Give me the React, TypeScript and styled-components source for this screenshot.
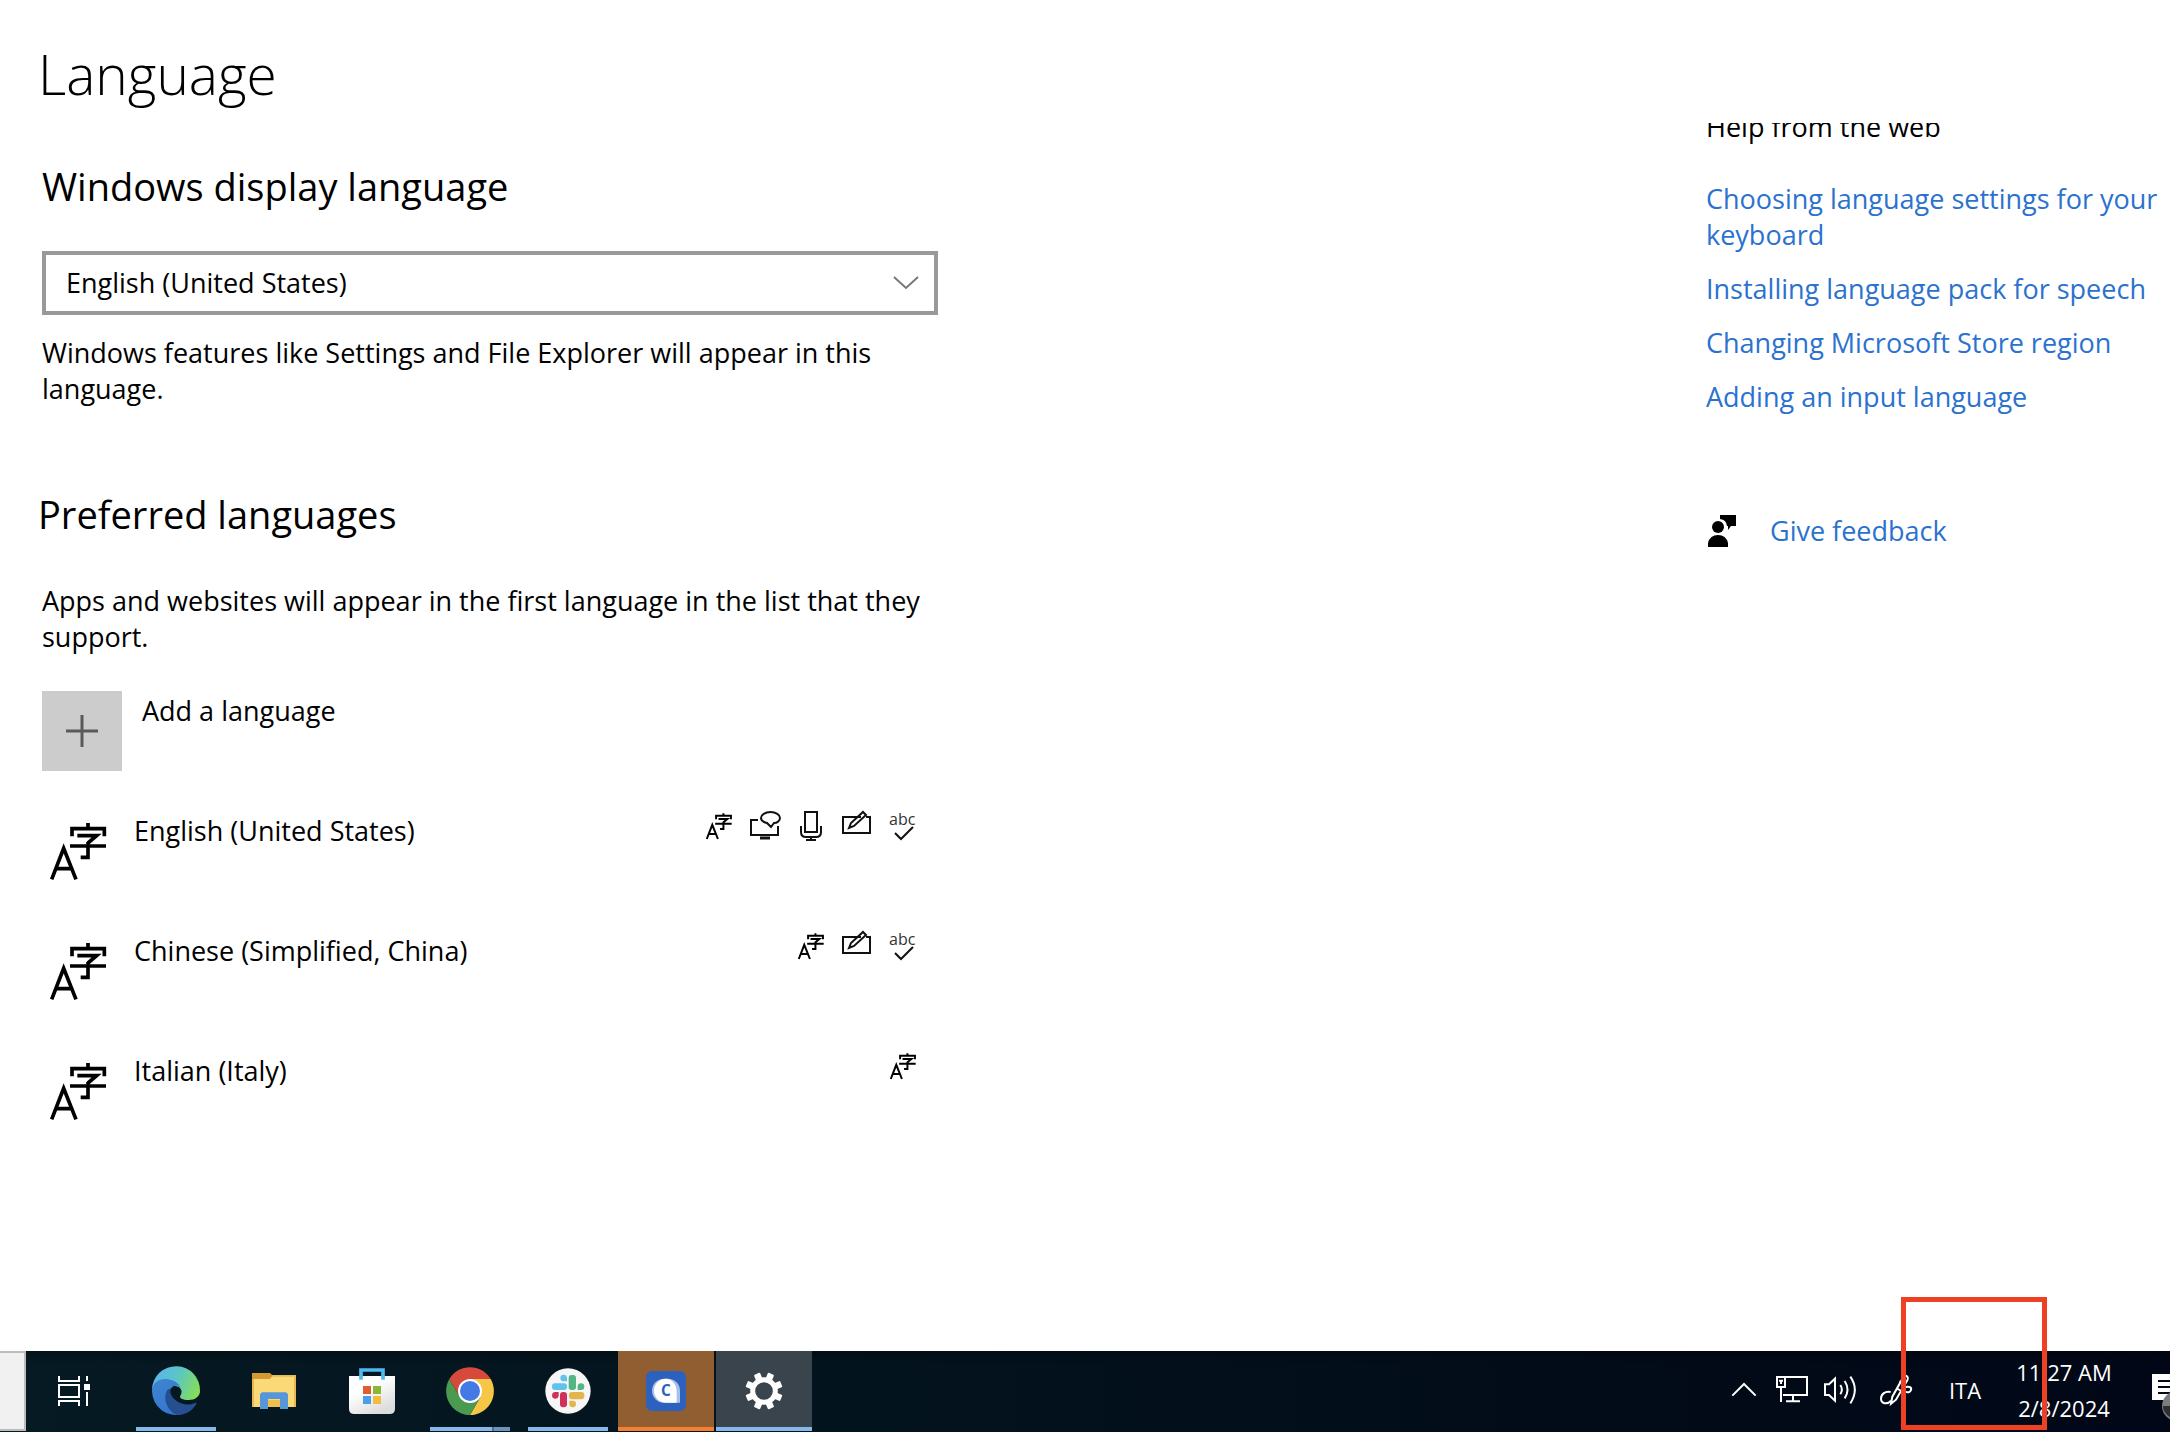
import React from "react";
import styled, { createGlobalStyle, css } from "styled-components";

const ui = `"Open Sans", "Noto Sans", "Noto Sans CJK SC", sans-serif`;

const GlobalStyle = createGlobalStyle`
  *, *::before, *::after { box-sizing: border-box; }
  body { margin: 0; background: #fff; color: #000; font: 400 27px/36px ${ui}; }
  h1, h2, h3, p, ul { margin: 0; padding: 0; font-weight: 400; }
  ul { list-style: none; }
  button, select { font: inherit; color: inherit; background: none; border: 0; padding: 0; margin: 0; border-radius: 0; }
  svg { display: block; flex: none; overflow: visible; }
`;

/* ---------- page ---------- */

const Page = styled.div`
  display: flex;
  flex-direction: column;
  min-height: 100vh;
  overflow: hidden;
`;

const Body = styled.div`
  flex: 1;
  display: flex;
  justify-content: space-between;
  align-items: flex-start;
`;

const Main = styled.main`
  flex: 0 1 938px;
  padding: 38px 0 40px 42px;
`;

const Title = styled.h1`
  margin-left: -4px;
  font-size: 55px;
  line-height: 72px;
  font-weight: 300;
`;

const Section = styled.section<{ $top: number }>`
  margin-top: ${(p) => p.$top}px;
`;

const Heading = styled.h2<{ $outdent?: boolean }>`
  font-size: 38px;
  line-height: 52px;
  ${(p) => p.$outdent && css`margin-left: -4px;`}
`;

const SelectBox = styled.div`
  display: grid;
  align-items: center;
  margin-top: 39px;
  > * { grid-area: 1 / 1; }
  > svg { justify-self: end; margin-right: 20px; pointer-events: none; }
`;

const Select = styled.select`
  appearance: none;
  width: 100%;
  height: 64px;
  padding-left: 20px;
  border: 4px solid #999;
  background: #fff;
`;

const Note = styled.p<{ $top: number }>`
  margin-top: ${(p) => p.$top}px;
`;

const List = styled.ul`
  display: flex;
  flex-direction: column;
  gap: 40px;
  margin-top: 40px;
`;

const rowLayout = css<{ $gap: number }>`
  display: flex;
  align-items: flex-start;
  gap: ${(p) => p.$gap}px;
  min-height: 80px;
  text-align: left;
`;

const AddButton = styled.button<{ $gap: number }>`
  ${rowLayout}
  margin-top: 36px;
`;

const LanguageRow = styled.li<{ $gap: number }>`
  ${rowLayout}
`;

const Tile = styled.span<{ $fill?: string }>`
  display: grid;
  place-items: center;
  flex: none;
  width: 80px;
  height: 80px;
  background: ${(p) => p.$fill || "transparent"};
`;

const RowLabel = styled.span`
  padding-top: 2px;
`;

const Features = styled.div`
  display: flex;
  margin-left: auto;
  padding-right: 12px;
`;

/* ---------- help column ---------- */

const Aside = styled.aside`
  flex: 0 0 464px;
  margin-top: 123px;
  overflow: hidden;
`;

const HelpTitle = styled.h3`
  margin-top: -14px;
  font-size: 27px;
`;

const HelpLinks = styled.ul`
  display: flex;
  flex-direction: column;
  gap: 18px;
  margin-top: 36px;
`;

const Link = styled.a`
  display: block;
  color: #2b72cf;
  text-decoration: none;
`;

const Feedback = styled.div`
  display: flex;
  align-items: center;
  gap: 34px;
  margin-top: 98px;
  padding-left: 2px;
`;

/* ---------- taskbar ---------- */

const Taskbar = styled.footer`
  display: flex;
  height: 81px;
  padding-bottom: 1px;
  background: linear-gradient(180deg, rgba(0, 0, 0, 0.3), rgba(0, 0, 0, 0) 14px),
    linear-gradient(90deg, #061a23, #03131d 40%, #020a18 80%, #010717);
  color: #fff;
  font-size: 22px;
`;

const SearchEdge = styled.div`
  width: 26px;
  background: #f1f1f1;
  border: 2px solid #bcbcbc;
  border-left: 0;
`;

const Apps = styled.nav`
  display: flex;
  gap: 2px;
`;

const AppButton = styled.button<{ $bg?: string; $bar?: string; $full?: boolean; $last?: number }>`
  position: relative;
  display: grid;
  place-items: center;
  width: 96px;
  margin-right: ${(p) => p.$last || 0}px;
  background: ${(p) => p.$bg || "transparent"};
  &::after {
    content: "";
    position: absolute;
    bottom: 0;
    left: ${(p) => (p.$full ? 0 : 8)}px;
    right: ${(p) => (p.$full ? 0 : 8)}px;
    height: 4px;
    background: ${(p) => p.$bar || "transparent"};
  }
`;

const Tray = styled.div`
  display: flex;
  margin-left: auto;
`;

const TrayButton = styled.button<{ $w: number }>`
  position: relative;
  display: grid;
  place-items: center;
  width: ${(p) => p.$w}px;
  padding-bottom: 2px;
  line-height: 36px;
`;

const Highlight = styled.span`
  position: absolute;
  z-index: 1;
  inset: -54px -45px 1px -27px;
  border: 5px solid #ed4024;
  pointer-events: none;
`;

const Notifications = styled.button`
  width: 44px;
  padding-left: 26px;
  overflow: hidden;
`;

/* ---------- icons ---------- */

/* Language pack symbol, shared by the large row icon and the small feature icon. */
const LanguageMark = ({ weight }: { weight: number }) => (
  <g fill="none" stroke="#000" strokeWidth={weight}>
    <path d="M155 298l36-93 37 93M167 266h48" />
    <path d="M264 129v16M216 169v-23h97v23M232 167h58l-26 22M210 198h108M264 186v46h-22" />
  </g>
);

const LangIcon = () => (
  <svg width="80" height="80" viewBox="126 93 240 240" aria-hidden="true">
    <LanguageMark weight={11} />
  </svg>
);

type FeatureName = "display" | "speech" | "mic" | "pen" | "spell";

function FeatureIcon({ name }: { name: FeatureName }) {
  return (
    <svg width="46" height="32" viewBox="0 0 46 32" fill="none" stroke="#111" strokeWidth="2" role="img" aria-label={name}>
      {name === "display" && (
        <svg x="10" y="2" width="26" height="26" viewBox="150 128 170 170">
          <LanguageMark weight={13} />
        </svg>
      )}
      {name === "speech" && (
        <>
          <path d="M16 9H9v15h27V15" />
          <path d="M18 27h10" strokeWidth="3" />
          <path d="M25 12c-4-1-6-3-6-5 0-3 4-6 9.500-6s9.500 3 9.500 6-3 5-6 5l-3 4z" />
        </>
      )}
      {name === "mic" && (
        <>
          <path d="M17 1h12v20H17z" />
          <path d="M13 15v6q0 5 5 5h10q5 0 5-5v-6M23 26v3M18 29h10" />
        </>
      )}
      {name === "pen" && (
        <>
          <path d="M27 6H9v16h27V6h-4" />
          <path d="M15 17l2-5L29 1l3 3-12 11z" />
        </>
      )}
      {name === "spell" && (
        <>
          <text x="9" y="14" fontSize="16" fill="#333" stroke="none" fontFamily="Open Sans, sans-serif">abc</text>
          <path d="M15 22l6 6L33 16" />
        </>
      )}
    </svg>
  );
}

const ChevronDown = () => (
  <svg width="24" height="14" viewBox="0 0 24 14" fill="none" stroke="#777" strokeWidth="2" aria-hidden="true">
    <path d="M0 1l12 11L24 1" />
  </svg>
);

const PlusIcon = () => (
  <svg width="32" height="32" viewBox="0 0 32 32" fill="none" stroke="#5a5a5a" strokeWidth="3" aria-hidden="true">
    <path d="M16 0v32M0 16h32" />
  </svg>
);

const FeedbackIcon = () => (
  <svg width="28" height="32" viewBox="0 0 28 32" aria-hidden="true">
    <path d="M12 0h16v11h-5l-3 4v-4h-1a8 8 0 0 0-7-7z" />
    <circle cx="10" cy="12" r="6" />
    <path d="M0 32v-4q2-8 10-8t10 8v4z" />
  </svg>
);

const TaskViewIcon = () => (
  <svg width="32" height="30" viewBox="174 135 96 90" fill="none" stroke="#fff" strokeWidth="6" aria-hidden="true">
    <path d="M177 135v15h60v-15M177 162h60v36h-60zM177 225v-15h60v15M261 135v15M261 183v42" />
    <path d="M252 159h18v18h-18z" fill="#fff" stroke="none" />
  </svg>
);

const EdgeIcon = () => (
  <svg width="48" height="48" viewBox="456 111 144 144" aria-hidden="true">
    <defs>
      <linearGradient id="edgeTop" x1="0" y1="0.300" x2="1" y2="0.600">
        <stop offset="0" stopColor="#5ab4ee" />
        <stop offset="0.500" stopColor="#5cc6c4" />
        <stop offset="1" stopColor="#84de58" />
      </linearGradient>
      <linearGradient id="edgeLeft" x1="0" y1="0" x2="0.500" y2="1">
        <stop offset="0" stopColor="#3f86cf" />
        <stop offset="1" stopColor="#3576d2" />
      </linearGradient>
    </defs>
    <path fill="url(#edgeTop)" d="M456 178A72 72 0 0 1 600 183C600 200 585 210 566 210C548 210 537 204 541 197C547 188 546 180 538 172L520 166L480 160Z" />
    <path fill="url(#edgeLeft)" d="M456 183C457 160 474 147 496 147C522 148 538 160 542 176C534 162 514 164 509 184C506 206 520 236 548 252A72 72 0 0 1 456 183Z" />
    <path fill="#264f92" d="M502 180C490 200 494 236 530 255C556 255 576 244 589 222C590 218 587 217 584 219C568 227 545 224 530 213C515 202 508 190 512 174Z" />
  </svg>
);

const ExplorerIcon = () => (
  <svg width="44" height="36" viewBox="756 129 132 108" aria-hidden="true">
    <path fill="#e9b851" d="M756 135h132v96H756z" />
    <path fill="#fbd976" d="M762 140h120v91H762z" />
    <path fill="#d49a32" d="M756 129h54l6 6v5l-7 7h-53z" />
    <path fill="#5696db" d="M786 187h72l6 6v44h-24v-30h-36v30h-24v-44z" />
    <path fill="#efc04c" d="M804 210h36v21h-36z" />
  </svg>
);

const StoreIcon = () => (
  <svg width="46" height="46" viewBox="1044 117 138 138" aria-hidden="true">
    <defs>
      <linearGradient id="bag" x1="0" y1="0" x2="0.600" y2="1">
        <stop offset="0.400" stopColor="#fff" />
        <stop offset="1" stopColor="#dcdcdc" />
      </linearGradient>
    </defs>
    <path fill="url(#bag)" d="M1044 141h138v98q0 16-16 16h-106q-16 0-16-16z" />
    <path fill="none" stroke="#4fb9f0" strokeWidth="11" d="M1080 152v-29h66v29" />
    <path fill="#e15b33" d="M1086 171h24v24h-24z" />
    <path fill="#8ab833" d="M1116 171h24v24h-24z" />
    <path fill="#4b9fe9" d="M1086 201h24v24h-24z" />
    <path fill="#f5bb3e" d="M1116 201h24v24h-24z" />
  </svg>
);

const ChromeIcon = () => (
  <svg width="48" height="48" viewBox="-72 -72 144 144" aria-hidden="true">
    <path fill="#d64a3b" d="M-62-36A72 72 0 0 1 62-36H0L-31 18Z" />
    <path fill="#f6c646" d="M62-36A72 72 0 0 1 0 72L31 18L0-36Z" />
    <path fill="#4a9a50" d="M0 72A72 72 0 0 1-62-36L-31 18H31Z" />
    <circle r="36" fill="#fff" />
    <circle r="30" fill="#4579e6" />
  </svg>
);

const SlackIcon = () => (
  <svg width="46" height="46" viewBox="404 113 138 138" aria-hidden="true">
    <circle cx="473" cy="182" r="68" fill="#f6f6f6" />
    <g fill="#5fc3ee">
      <rect x="425" y="159" width="45" height="20" rx="9" />
      <path d="M470 153h-11a10 10 0 1 1 11-10z" />
    </g>
    <g fill="#52b583">
      <rect x="475" y="134" width="22" height="45" rx="9" />
      <path d="M502 179v-11a10 10 0 1 1 10 11z" />
    </g>
    <g fill="#d0315c">
      <rect x="449" y="185" width="21" height="46" rx="9" />
      <path d="M445 185v12a10 10 0 1 1-10-12z" />
    </g>
    <g fill="#e4b44e">
      <rect x="476" y="185" width="46" height="22" rx="9" />
      <path d="M477 211h11a10 10 0 1 1-11 10z" />
    </g>
  </svg>
);

const CIcon = () => (
  <svg width="40" height="40" viewBox="708 124 120 120" aria-hidden="true">
    <rect x="708" y="124" width="120" height="120" rx="18" fill="#2c61bd" />
    <path fill="#a9c1ea" d="M762 147a36 36 0 0 0 0 72h48v-36a36 36 0 0 0-36-36z" />
    <path fill="#fff" d="M768 147a36 36 0 0 0 0 72h32v-36a34 36 0 0 0-32-36z" />
    <text x="768" y="200" textAnchor="middle" fontSize="46" fontWeight="700" fill="#2c61bd" fontFamily="Open Sans, sans-serif">C</text>
  </svg>
);

const GearIcon = () => (
  <svg width="38" height="38" viewBox="-57 -57 114 114" aria-hidden="true">
    <circle r="34" fill="none" stroke="#fff" strokeWidth="15" />
    {[0, 1, 2, 3, 4, 5, 6, 7].map((i) => (
      <rect key={i} x="-10" y="-56" width="20" height="20" rx="3" fill="#fff" transform={`rotate(${22.5 + i * 45})`} />
    ))}
  </svg>
);

const ChevronUp = () => (
  <svg width="26" height="16" viewBox="93 310 78 48" fill="none" stroke="#fff" strokeWidth="6" aria-hidden="true">
    <path d="M97 351l35-35 35 35" />
  </svg>
);

const NetworkIcon = () => (
  <svg width="32" height="28" viewBox="228 297 96 84" fill="none" stroke="#fff" strokeWidth="6" aria-hidden="true">
    <path d="M231 300h24v30h-24zM237 311h12M243 311v10M255 300h66v54h-72M243 330v45M279 354v18M258 373h42" />
  </svg>
);

const SpeakerIcon = () => (
  <svg width="34" height="30" viewBox="369 289 102 90" fill="none" stroke="#fff" strokeWidth="6" aria-hidden="true">
    <path d="M375 317h12l18-17v66l-18-17h-12z" />
    <path d="M421 319q9 14 0 28M434 307q17 26 0 52M451 294q27 39 0 80" />
  </svg>
);

const InkIcon = () => (
  <svg width="34" height="32" viewBox="537 288 102 96" fill="none" stroke="#fff" strokeWidth="6" aria-hidden="true">
    <path d="M572 342c-16-4-29 6-29 20s18 20 30 6" />
    <path d="M573 377l4-21 32-57q7-9 13-3 4 5 0 11l-34 58zM588 330l16 9M598 310l16 9" />
    <path d="M612 328c14-5 24 0 21 8-2 7-10 9-17 5" />
  </svg>
);

const NotificationIcon = () => (
  <svg width="48" height="48" viewBox="0 0 48 48" aria-hidden="true">
    <path fill="#fff" d="M0 7h32v26H0z" />
    <path stroke="#020a18" strokeWidth="2" d="M6 14h26M6 20h26M6 26h26" />
    <circle cx="25" cy="39" r="15" fill="#7d7d7d" />
    <path fill="#2f2f2f" d="M11 39h30a15 13 0 0 1-30 0z" />
  </svg>
);

/* ---------- data ---------- */

const languages: { name: string; features: FeatureName[] }[] = [
  { name: "English (United States)", features: ["display", "speech", "mic", "pen", "spell"] },
  { name: "Chinese (Simplified, China)", features: ["display", "pen", "spell"] },
  { name: "Italian (Italy)", features: ["display"] },
];

const helpLinks = [
  "Choosing language settings for your keyboard",
  "Installing language pack for speech",
  "Changing Microsoft Store region",
  "Adding an input language",
];

const blue = "#86b8ea";

export default function App() {
  return (
    <Page>
      <GlobalStyle />
      <Body>
        <Main>
          <Title>Language</Title>
          <Section $top={50}>
            <Heading id="display-language">Windows display language</Heading>
            <SelectBox>
              <Select aria-labelledby="display-language">
                <option>English (United States)</option>
              </Select>
              <ChevronDown />
            </SelectBox>
            <Note $top={20}>Windows features like Settings and File Explorer will appear in this language.</Note>
          </Section>
          <Section $top={81}>
            <Heading $outdent>Preferred languages</Heading>
            <Note $top={43}>Apps and websites will appear in the first language in the list that they support.</Note>
            <AddButton type="button" $gap={20}>
              <Tile $fill="#ccc"><PlusIcon /></Tile>
              <RowLabel>Add a language</RowLabel>
            </AddButton>
            <List>
              {languages.map((l) => (
                <LanguageRow key={l.name} $gap={12}>
                  <Tile><LangIcon /></Tile>
                  <RowLabel>{l.name}</RowLabel>
                  <Features>
                    {l.features.map((f) => <FeatureIcon key={f} name={f} />)}
                  </Features>
                </LanguageRow>
              ))}
            </List>
          </Section>
        </Main>
        <Aside>
          <HelpTitle>Help from the web</HelpTitle>
          <HelpLinks>
            {helpLinks.map((t) => <li key={t}><Link href="#">{t}</Link></li>)}
          </HelpLinks>
          <Feedback>
            <FeedbackIcon />
            <Link href="#">Give feedback</Link>
          </Feedback>
        </Aside>
      </Body>
      <Taskbar>
        <SearchEdge />
        <Apps>
          <AppButton aria-label="Task view" $last={4}><TaskViewIcon /></AppButton>
          <AppButton aria-label="Edge" $bar={blue}><EdgeIcon /></AppButton>
          <AppButton aria-label="File Explorer"><ExplorerIcon /></AppButton>
          <AppButton aria-label="Store"><StoreIcon /></AppButton>
          <AppButton aria-label="Chrome" $bar={`linear-gradient(90deg, ${blue} 62px, #4f6f8e 62px, #4f6f8e 64px, #6d94bb 64px)`}><ChromeIcon /></AppButton>
          <AppButton aria-label="Slack" $bar={blue}><SlackIcon /></AppButton>
          <AppButton aria-label="C" $bg="#915e32" $bar="#f47f2e" $full><CIcon /></AppButton>
          <AppButton aria-label="Settings" $bg="#39444c" $bar={blue} $full><GearIcon /></AppButton>
        </Apps>
        <Tray>
          <TrayButton $w={48} aria-label="Show hidden icons"><ChevronUp /></TrayButton>
          <TrayButton $w={48} aria-label="Network"><NetworkIcon /></TrayButton>
          <TrayButton $w={48} aria-label="Volume"><SpeakerIcon /></TrayButton>
          <TrayButton $w={64} aria-label="Ink workspace"><InkIcon /></TrayButton>
          <TrayButton $w={74}>ITA<Highlight /></TrayButton>
          <TrayButton $w={124}><span>11:27 AM<br />2/8/2024</span></TrayButton>
          <Notifications aria-label="Notifications"><NotificationIcon /></Notifications>
        </Tray>
      </Taskbar>
    </Page>
  );
}
